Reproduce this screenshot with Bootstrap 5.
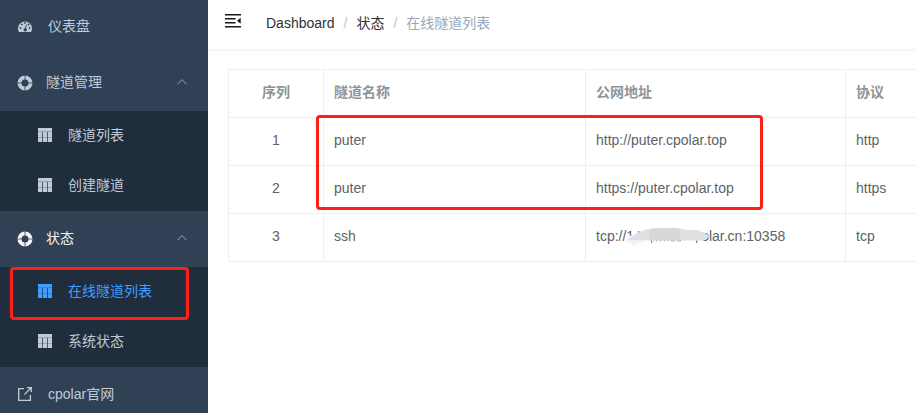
<!DOCTYPE html>
<html lang="zh-CN">
<head>
<meta charset="utf-8">
<meta name="viewport" content="width=device-width, initial-scale=1">
<title>cpolar - 在线隧道列表</title>
<link href="https://cdn.jsdelivr.net/npm/bootstrap@5.3.0/dist/css/bootstrap.min.css" rel="stylesheet">
<style>
body{font-family:"Liberation Sans","Noto Sans CJK SC",sans-serif;font-size:14px;line-height:20px;color:#606266;height:413px}
.side{width:208px;background:#304156;color:#bfcbd9;margin-top:-1px;height:414px}
.side a{color:inherit;text-decoration:none}
.side svg{display:block;flex:none}
.item{height:56px;padding:0 20px 2px 17px;white-space:nowrap}
.item-main{padding-left:18px}
.item-main>svg:first-child{margin-right:16px}
.item-group>svg:first-child{margin:2px 13px 0 0}
.sub{background:#1f2d3d}
.sub a{height:50px;padding:0 0 2px 38px}
.sub svg{margin-right:16px}
.side .current{color:#409eff}
.opened{color:#f4f4f5}
.arrow{color:#7d8792}
.topbar{height:49px;box-shadow:0 1px 4px rgba(0,21,41,.08);padding-left:17px;padding-bottom:3px}
.topbar svg{margin:-4px 25px 0 0}
.breadcrumb{--bs-breadcrumb-divider-color:#c0c4cc;--bs-breadcrumb-item-padding-x:9px;color:#303133}
.breadcrumb .active{color:#97a8be}
.content{padding:20px 0 0 20px}
.tunnels{width:868px;table-layout:fixed;border-collapse:separate;border-spacing:0;border:solid #ebeef5;border-width:1px 0 0 1px;color:#606266}
.tunnels th,.tunnels td{height:48px;padding:0 10px 3px;border:solid #ebeef5;border-width:0 1px 1px 0;vertical-align:middle;white-space:nowrap}
.tunnels th{color:#909399;font-weight:700}
.smudge{display:inline-block;width:84px;height:20px;vertical-align:top;margin:0 -8px 0 -9px;position:relative}
.smudge svg{display:block}
.highlight{position:absolute;border:3px solid #fb2116;border-radius:4px;pointer-events:none}
.highlight-menu{left:9.5px;top:266.5px;width:179px;height:53px}
.highlight-rows{left:315.5px;top:114.5px;width:447px;height:95px}
</style>
</head>
<body class="m-0 overflow-hidden bg-white">
<svg class="d-none">
  <symbol id="grid" viewBox="0 0 14 14"><path fill="currentColor" d="M0 0h14v4H0zM0 4h4v10H0zM5 4h4v10H5zM10 4h4v10h-4z"/><path fill="#1f2d3d" opacity=".25" d="M0 3h14v1H0zM0 9h14v1H0z"/><path fill="currentColor" opacity=".3" d="M4 4h1v10H4zM9 4h1v10H9z"/></symbol>
  <symbol id="ring" viewBox="0 0 16 16"><circle cx="8" cy="8" r="5.5" fill="none" stroke="currentColor" stroke-width="4"/><path stroke="#304156" stroke-width=".8" d="M8 0v5M8 11v5M0 8h5M11 8h5"/></symbol>
  <symbol id="up" viewBox="0 0 12 8"><path fill="none" stroke="currentColor" stroke-width="1.1" d="M1.5 6.2 6 1.7l4.5 4.5"/></symbol>
</svg>
<div class="d-flex">
  <nav class="side flex-shrink-0">
    <a href="#" class="item item-main d-flex align-items-center">
      <svg width="14" height="14" viewBox="0 0 14 14"><path fill="currentColor" d="M1 13a7 7 0 1 1 12 0z"/><g fill="#304156"><circle cx="2.5" cy="9" r=".9"/><circle cx="3.8" cy="5.4" r=".9"/><circle cx="7" cy="3.9" r=".9"/><circle cx="10.6" cy="5.5" r=".9"/><circle cx="11.6" cy="9" r=".9"/><path d="m8.1 5.2.7.2-.8 4a1.6 1.6 0 1 1-1-.2z"/></g></svg>
      <span>仪表盘</span>
    </a>
    <a href="#" class="item item-group d-flex align-items-center">
      <svg width="16" height="16"><use href="#ring"/></svg><span>隧道管理</span>
      <svg class="arrow ms-auto" width="12" height="8"><use href="#up"/></svg>
    </a>
    <div class="sub">
      <a href="#" class="d-flex align-items-center"><svg width="14" height="14"><use href="#grid"/></svg>隧道列表</a>
      <a href="#" class="d-flex align-items-center"><svg width="14" height="14"><use href="#grid"/></svg>创建隧道</a>
    </div>
    <a href="#" class="item item-group d-flex align-items-center">
      <svg class="opened" width="16" height="16"><use href="#ring"/></svg><span class="opened">状态</span>
      <svg class="arrow ms-auto" width="12" height="8"><use href="#up"/></svg>
    </a>
    <div class="sub">
      <a href="#" class="current d-flex align-items-center"><svg width="14" height="14"><use href="#grid"/></svg>在线隧道列表</a>
      <a href="#" class="d-flex align-items-center"><svg width="14" height="14"><use href="#grid"/></svg>系统状态</a>
    </div>
    <a href="#" class="item item-main d-flex align-items-center">
      <svg width="14" height="14" viewBox="0 0 14 14" fill="none" stroke="currentColor" stroke-width="1.3"><path d="M6 1.6H.7v11.7h11.7V8M9 .7h4.3V5M13.2.8 6.4 7.6"/></svg>
      <span>cpolar官网</span>
    </a>
  </nav>
  <main class="flex-grow-1 overflow-hidden">
    <header class="topbar d-flex align-items-center">
      <svg width="16" height="14" viewBox="0 0 16 14" fill="#17181a"><path d="M0 0h16v1.5H0zM0 4h10.5v1.5H0zM0 8h10.5v1.5H0zM0 12h16v1.5H0zM15.7 3.8v6L12 6.8z"/></svg>
      <ol class="breadcrumb mb-0">
        <li class="breadcrumb-item">Dashboard</li>
        <li class="breadcrumb-item">状态</li>
        <li class="breadcrumb-item active">在线隧道列表</li>
      </ol>
    </header>
    <div class="content">
      <table class="tunnels">
        <colgroup><col style="width:95px"><col style="width:262px"><col style="width:260px"><col></colgroup>
        <thead><tr><th class="text-center">序列</th><th>隧道名称</th><th>公网地址</th><th>协议</th></tr></thead>
        <tbody>
          <tr><td class="text-center">1</td><td>puter</td><td>http://puter.cpolar.top</td><td>http</td></tr>
          <tr><td class="text-center">2</td><td>puter</td><td>https://puter.cpolar.top</td><td>https</td></tr>
          <tr><td class="text-center">3</td><td>ssh</td><td>tcp://1<span class="smudge"><svg width="84" height="20" viewBox="0 0 84 20"><path fill="#fff" d="M0 10h12v8H0z"/><path fill="#606266" opacity=".8" d="M13 5h1.3v2H13zM26 12h1.2v5H26zM31 14h1v1.2h-1zM35 14h1v1.2h-1zM39 14h1v1.2h-1zM43 14h1v1.2h-1zM46 14h3.5v1.2H46zM52 14h4v1.2h-4zM71 12h1.2v5H71z"/><path fill="#dfe0e1" d="M1 14.5 10 8l9-4 10-2h22l12 2h10l9 4 2 3-5 3.5z"/><path fill="#d6d8da" d="M24 3.3 32 2h19l4 1v11.5H24z"/><path fill="#f3f3f4" d="M2 14.5h19L8 20z"/></svg></span>olar.cn:10358</td><td>tcp</td></tr>
        </tbody>
      </table>
    </div>
  </main>
</div>
<div class="highlight highlight-menu"></div>
<div class="highlight highlight-rows"></div>
<script src="https://cdn.jsdelivr.net/npm/bootstrap@5.3.0/dist/js/bootstrap.bundle.min.js"></script>
</body>
</html>
